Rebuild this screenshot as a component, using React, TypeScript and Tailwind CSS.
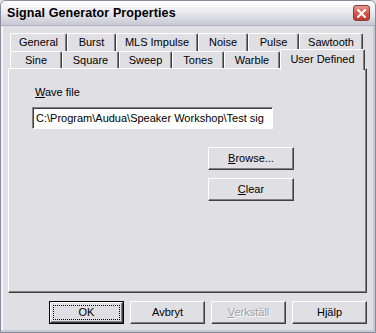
import React from "react";

const raised =
  "border border-t-white border-l-white border-r-[#404040] border-b-[#404040] shadow-[inset_-1px_-1px_0_#808080]";

const Btn = ({
  children,
  className = "",
}: {
  children: React.ReactNode;
  className?: string;
}) => (
  <div
    className={`flex items-center justify-center bg-[#E0DFE3] text-black ${raised} ${className}`}
  >
    {children}
  </div>
);

const Tab = ({ label, w, h }: { label: string; w: string; h: string }) => (
  <div
    className={`${w} ${h} flex items-center justify-center rounded-t-[2px] border-t border-l border-r border-t-white border-l-white border-r-[#404040] shadow-[inset_-1px_0_0_#808080] bg-[#E0DFE3]`}
  >
    {label}
  </div>
);

export default function App() {
  return (
    <div className="w-[376px] h-[333px] bg-[#E0DFE3] font-['Liberation_Sans',sans-serif] text-[11px] leading-[13px] text-black">
      <div className="w-full h-full border border-[#8A8A9C] rounded-t-[6px] flex flex-col shadow-[inset_-2px_-2px_0_#C8C8D2,inset_2px_0_0_#F4F4F8]">
        {/* title bar */}
        <div className="h-[25px] shrink-0 flex items-center justify-between pl-[6px] pr-[5px] rounded-t-[5px] bg-gradient-to-b from-[#FFFFFF] via-[#E8E8EE] to-[#C8C8D4] border-b border-[#B0B0BC]">
          <span className="font-bold text-[12.5px] tracking-[0.1px]">
            Signal Generator Properties
          </span>
          <div className="w-[17px] h-[16px] rounded-[3px] bg-gradient-to-b from-[#E8988E] via-[#D45A4E] to-[#B83A30] border border-[#8E3A36] flex items-center justify-center">
            <svg width="9" height="9" viewBox="0 0 9 9">
              <path
                d="M1 1 L8 8 M8 1 L1 8"
                stroke="white"
                strokeWidth="2"
                strokeLinecap="square"
              />
            </svg>
          </div>
        </div>

        {/* body */}
        <div className="flex-1 flex flex-col pl-[7px] pr-[8px] pt-[7px]">
          {/* tab rows */}
          <div className="flex flex-col pl-[2px]">
            <div className="flex">
              <Tab label="General" w="w-[57px]" h="h-[18px]" />
              <Tab label="Burst" w="w-[49px]" h="h-[18px]" />
              <Tab label="MLS Impulse" w="w-[82px]" h="h-[18px]" />
              <Tab label="Noise" w="w-[50px]" h="h-[18px]" />
              <Tab label="Pulse" w="w-[51px]" h="h-[18px]" />
              <Tab label="Sawtooth" w="w-[64px]" h="h-[18px]" />
            </div>
            <div className="flex items-end h-[17px]">
              <Tab label="Sine" w="w-[52px]" h="h-[17px]" />
              <Tab label="Square" w="w-[57px]" h="h-[17px]" />
              <Tab label="Sweep" w="w-[53px]" h="h-[17px]" />
              <Tab label="Tones" w="w-[52px]" h="h-[17px]" />
              <Tab label="Warble" w="w-[56px]" h="h-[17px]" />
              <div className="relative z-10 w-[85px] h-[21px] mb-[-2px] flex items-start justify-center pt-[3px] rounded-t-[2px] border-t border-l border-r border-t-white border-l-white border-r-[#404040] shadow-[inset_-1px_0_0_#808080] bg-[#E0DFE3]">
                User Defined
              </div>
            </div>
          </div>

          {/* panel */}
          <div className="h-[225px] border border-t-white border-l-white border-r-[#404040] border-b-[#404040] shadow-[inset_-1px_-1px_0_#808080] flex flex-col pl-[23px] pr-[72px] pt-[17px]">
            <div className="pl-[3px]">
              <span className="underline">W</span>ave file
            </div>
            <div className="mt-[8px] w-[241px] h-[22px] bg-white border border-t-[#808080] border-l-[#808080] border-r-white border-b-white shadow-[inset_1px_1px_0_#404040] flex items-center pl-[3px] overflow-hidden whitespace-nowrap">
              C:\Program\Audua\Speaker Workshop\Test sig
            </div>
            <div className="flex flex-col items-end gap-[8px] mt-[18px]">
              <Btn className="w-[86px] h-[23px]">
                <span>
                  <span className="underline">B</span>rowse...
                </span>
              </Btn>
              <Btn className="w-[86px] h-[23px]">
                <span>
                  <span className="underline">C</span>lear
                </span>
              </Btn>
            </div>
          </div>

          {/* bottom buttons */}
          <div className="flex justify-end gap-[6px] mt-[8px] pr-[0px]">
            <div className="w-[75px] h-[23px] border border-black">
              <div className="w-full h-full bg-[#E0DFE3] border border-t-white border-l-white border-r-[#404040] border-b-[#404040] shadow-[inset_-1px_-1px_0_#808080] p-[2px]">
                <div className="w-full h-full border border-dotted border-black flex items-center justify-center">
                  OK
                </div>
              </div>
            </div>
            <Btn className="w-[75px] h-[23px]">Avbryt</Btn>
            <Btn className="w-[75px] h-[23px]">
              <span className="text-[#A0A0A8] [text-shadow:1px_1px_0_#FFFFFF]">
                <span className="underline">V</span>erkställ
              </span>
            </Btn>
            <Btn className="w-[75px] h-[23px]">Hjälp</Btn>
          </div>
        </div>
      </div>
    </div>
  );
}
